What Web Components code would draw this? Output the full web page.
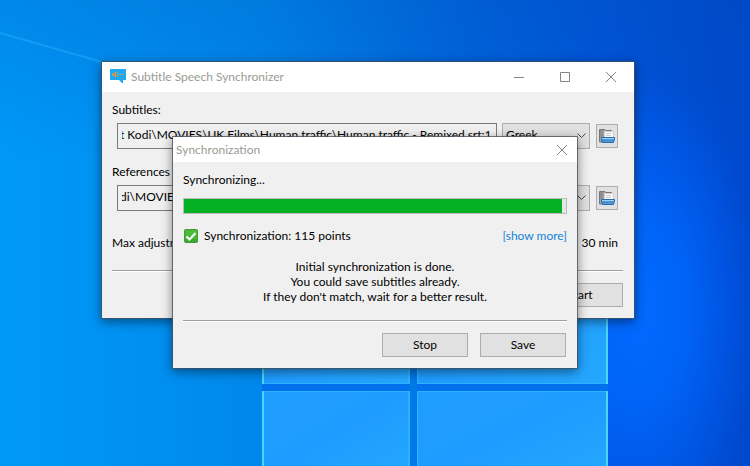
<!DOCTYPE html>
<html lang="en">
<head>
<meta charset="utf-8">
<title>Subtitle Speech Synchronizer</title>
<style>
html, body { margin: 0; height: 100%; overflow: hidden; }
body { font: 12px/16px Lato, "Noto Sans", sans-serif; color: #000; }
</style>
</head>
<body>
<sync-desktop></sync-desktop>
<script>
const define = (name, html, setup) => {
  const template = document.createElement('template');
  template.innerHTML = html;
  customElements.define(name, class extends HTMLElement {
    constructor() {
      super();
      this.attachShadow({ mode: 'open' }).append(template.content.cloneNode(true));
    }
    connectedCallback() { if (setup) setup(this, this.shadowRoot); }
  });
};

define('desktop-wallpaper', `
<style>
:host { display: block; }
svg { display: block; width: 100%; height: 100%; }
</style>
<svg viewBox="0 0 750 466" preserveAspectRatio="none" aria-hidden="true">
  <defs>
    <linearGradient id="base" x1="0" y1="0" x2="1" y2="0">
      <stop offset="0" stop-color="#0099f8"/><stop offset=".13" stop-color="#0093f4"/>
      <stop offset=".34" stop-color="#0088ec"/><stop offset=".62" stop-color="#0064de"/>
      <stop offset=".82" stop-color="#0054da"/><stop offset="1" stop-color="#0048cc"/>
    </linearGradient>
    <linearGradient id="top" x1="0" y1="0" x2="0" y2="1">
      <stop offset="0" stop-color="#0048a8" stop-opacity=".2"/><stop offset=".35" stop-color="#0048a8" stop-opacity="0"/>
    </linearGradient>
    <radialGradient id="glow" cx="0" cy="0" r="1" gradientUnits="userSpaceOnUse" gradientTransform="translate(640 310) scale(120 240)">
      <stop offset="0" stop-color="#006aff"/><stop offset=".4" stop-color="#0068ff" stop-opacity=".8"/><stop offset="1" stop-color="#0060ff" stop-opacity="0"/>
    </radialGradient>
    <linearGradient id="pane" x1="0" y1="0" x2="1" y2="1">
      <stop offset="0" stop-color="#209eff"/><stop offset=".5" stop-color="#1f9cff"/><stop offset="1" stop-color="#25a8ff"/>
    </linearGradient>
  </defs>
  <rect width="750" height="466" fill="url(#base)"/>
  <rect width="750" height="466" fill="url(#top)"/>
  <rect width="750" height="466" fill="url(#glow)"/>
  <path d="M0 33 102 62" stroke="#20a8fa" stroke-width="2" opacity=".6"/>
  <path d="M262 384H608V391H262Z" fill="#0070ec"/>
  <path d="M410 300H417V466H410Z" fill="#0078e6"/>
  <g fill="url(#pane)" stroke="#2cb2ff">
    <path d="M262.500 250.500H409.500V383.500H262.500Z"/><path d="M417.500 250.500H607.500V383.500H417.500Z"/>
    <path d="M262.500 391.500H409.500V480H262.500Z"/><path d="M417.500 391.500H607.500V480H417.500Z"/>
  </g>
  <path d="M263 300V384M263 391V466M607 300V384M607 391V466" stroke="#48d8ff" stroke-width="2"/>
  <path d="M409 300V384M409 391V466" stroke="#30bcff"/>
</svg>`);

define('app-window', `
<style>
:host { display: flex; flex-direction: column; box-sizing: border-box; border: 1px solid rgba(70,80,90,.75); background: #f0f0f0; background-clip: padding-box; box-shadow: 0 3px 10px rgba(0,0,0,.45); }
header { display: flex; align-items: center; gap: 5px; min-height: var(--bar, 30px); box-sizing: border-box; padding-left: var(--bar-pad, 8px); background: #fff; color: #999b93; }
h1 { flex: 1; margin: 0; font: inherit; }
.body { padding: 0 var(--end, 11px) 0 10px; }
</style>
<header><slot name="icon"></slot><h1></h1><slot name="controls"></slot></header>
<div class="body"><slot></slot></div>`,
(el, root) => { root.querySelector('h1').textContent = el.getAttribute('heading'); });

const glyphs = {
  minimize: ['Minimize', '<path d="M0 5.500H10"/>'],
  maximize: ['Maximize', '<path d="M.5.5H9.500V9.500H.5Z"/>'],
  close: ['Close', '<path d="M0 0 10 10M10 0 0 10"/>']
};
define('caption-button', `
<style>
:host { display: block; width: var(--cap, 46px); }
button { display: grid; place-items: center; width: 100%; height: 24px; padding: 0; border: 0; background: none; color: #858585; }
svg { width: 10px; height: 10px; fill: none; stroke: currentColor; overflow: visible; }
</style>
<button type="button"><svg viewBox="0 0 10 10"></svg></button>`,
(el, root) => {
  const [label, path] = glyphs[el.getAttribute('kind')];
  root.querySelector('button').setAttribute('aria-label', label);
  root.querySelector('svg').innerHTML = path;
});

define('app-logo', `
<style>:host { display: block; width: 16px; height: 16px; } svg { display: block; }</style>
<svg width="16" height="16" viewBox="0 0 16 16" aria-hidden="true">
  <path d="M0 0H16V11H13V14H12L9 11H0Z" fill="#20a9ee"/>
  <path d="M2 4.500H4L6 2.500V8.500L4 6.500H2Z" fill="#f0963a"/><path d="M4 5H5V6H4Z" fill="#8d8c78"/>
  <path d="M7 5H9V6H7ZM10 5H11V6H10ZM12 5H13V6H12ZM7 3H8V4H7ZM7 7H8V8H7Z" fill="#f0a040"/>
</svg>`);

define('push-button', `
<style>
:host { display: block; }
button { display: block; min-width: 86px; height: 24px; padding: 0 8px; border: 1px solid #adadad; background: #e1e1e1; color: inherit; font: inherit; }
</style>
<button type="button"><slot></slot></button>`);

define('browse-button', `
<style>
:host { display: block; }
button { display: grid; place-items: center; width: 22px; height: 24px; padding: 0; border: 1px solid #adadb1; background: #e1e1e1; }
</style>
<button type="button" aria-label="Browse">
  <svg width="16" height="16" viewBox="0 0 16 16" aria-hidden="true">
    <path d="M.5 14V1.500H6L7 2.500H12.500V14Z" fill="#a2a2a2" stroke="#777"/>
    <path d="M1 2H4V9H1Z" fill="#8f8f8f"/>
    <path d="M5.500 3.500H13L14.500 5V12H5.500Z" fill="#fafafa" stroke="#cfcfcf"/>
    <path d="M7 5.500H12M7 7.500H12" stroke="#c8cdd1"/>
    <path d="M2.500 9.500H15.500V11L14.500 14.500H3.500L2.500 11Z" fill="#4f9bdb" stroke="#226fac"/>
    <path d="M3 10.500H15" stroke="#9bd0f4"/><path d="M4 12.500H14" stroke="#3a84c6" stroke-dasharray="2 1"/>
  </svg>
</button>`);

define('etched-line', `
<style>:host { display: block; height: 1px; background: #a0a0a0; border-bottom: 1px solid #fff; }</style>`);

define('file-row', `
<style>
:host { display: block; }
label { display: block; }
.row { display: flex; align-items: center; padding: 5px 5px 0; }
input { flex: 1; min-width: 0; height: 26px; box-sizing: border-box; border: 1px solid #7a7a7a; padding: 0 5px 4px 4px; background: #f0f0f0; color: inherit; font: inherit; border-radius: 0; text-indent: -2px; }
.combo { display: grid; width: 88px; margin: 0 6px 0 5px; align-items: center; }
select { grid-area: 1/1; appearance: none; width: 100%; height: 26px; box-sizing: border-box; border: 1px solid #adadad; border-radius: 0; padding: 0 18px 2px 3px; background: #e1e1e1; font: inherit; color: inherit; }
.combo svg { grid-area: 1/1; justify-self: end; margin-right: 4px; pointer-events: none; }
</style>
<label for="path"></label>
<div class="row">
  <input id="path" type="text" readonly>
  <div class="combo"><select aria-label="Language"><option></option></select>
    <svg width="9" height="6" viewBox="0 0 9 6" fill="none" stroke="#444" aria-hidden="true"><path d="M.5.5 4.500 4.500 8.500.5"/></svg></div>
  <browse-button></browse-button>
</div>`,
(el, root) => {
  root.querySelector('label').textContent = el.getAttribute('label');
  root.querySelector('input').value = el.getAttribute('path');
  root.querySelector('option').textContent = el.getAttribute('language');
});

define('main-form', `
<style>
:host { display: flex; flex-direction: column; padding: 10px 0 11px; }
file-row { margin-bottom: 15px; }
.adjust { display: flex; justify-content: space-between; padding: 9px 5px 0 0; margin-bottom: 19px; }
.actions { display: flex; justify-content: flex-end; padding-top: 11px; }
</style>
<file-row label="Subtitles:" path="t Kodi\\MOVIES\\UK Films\\Human traffic\\Human traffic - Remixed.srt:1" language="Greek"></file-row>
<file-row label="References (" path="di\\MOVIES" language=""></file-row>
<div class="adjust"><span>Max adjustm</span><span>30 min</span></div>
<etched-line></etched-line>
<div class="actions"><push-button>Start</push-button></div>`);

define('progress-form', `
<style>
:host { display: flex; flex-direction: column; padding: 10px 0 11px; }
progress { appearance: none; display: block; width: 100%; height: 16px; margin: 10px 0 14px; border: 1px solid #bcbcbc; background: #e6e6e6; box-sizing: border-box; }
progress::-webkit-progress-bar { background: #e6e6e6; }
progress::-webkit-progress-value { background: #06b025; }
.result { display: flex; align-items: center; gap: 6px; }
.result svg { margin-left: 1px; }
a { margin-left: auto; color: #1583d8; text-decoration: none; }
p { margin: 15px 0 16px; text-align: center; line-height: 15px; }
.actions { display: flex; justify-content: flex-end; gap: 12px; padding: 11px 1px 0 0; }
</style>
<label for="bar">Synchronizing...</label>
<progress id="bar" value="99" max="100"></progress>
<div class="result">
  <svg width="14" height="14" viewBox="0 0 14 14" aria-hidden="true">
    <rect x=".5" y=".5" width="13" height="13" rx="1" fill="#48bd35" stroke="#4d9442"/>
    <path d="M1 10H13V13H1Z" fill="#3aab2a"/>
    <path d="M2.500 7.500 5.500 10.500 11.500 4" fill="none" stroke="#fff" stroke-width="2"/>
  </svg>
  <span>Synchronization: 115 points</span><a href="#more">[show more]</a>
</div>
<p>Initial synchronization is done.<br>You could save subtitles already.<br>If they don't match, wait for a better result.</p>
<etched-line></etched-line>
<div class="actions"><push-button>Stop</push-button><push-button>Save</push-button></div>`);

define('sync-desktop', `
<style>
:host { display: block; position: relative; height: 100%; overflow: hidden; }
desktop-wallpaper { height: 100%; }
app-window { position: absolute; }
.main { left: 101px; right: 115px; top: 61px; }
.dialog { left: 172px; right: 172px; top: 136px; --bar: 25px; --bar-pad: 3px; --cap: 30px; --end: 10px; }
</style>
<desktop-wallpaper></desktop-wallpaper>
<app-window class="main" heading="Subtitle Speech Synchronizer">
  <app-logo slot="icon"></app-logo>
  <div slot="controls" style="display:flex"><caption-button kind="minimize"></caption-button><caption-button kind="maximize"></caption-button><caption-button kind="close"></caption-button></div>
  <main-form></main-form>
</app-window>
<app-window class="dialog" role="dialog" heading="Synchronization">
  <caption-button slot="controls" kind="close"></caption-button>
  <progress-form></progress-form>
</app-window>`);
</script>
</body>
</html>
